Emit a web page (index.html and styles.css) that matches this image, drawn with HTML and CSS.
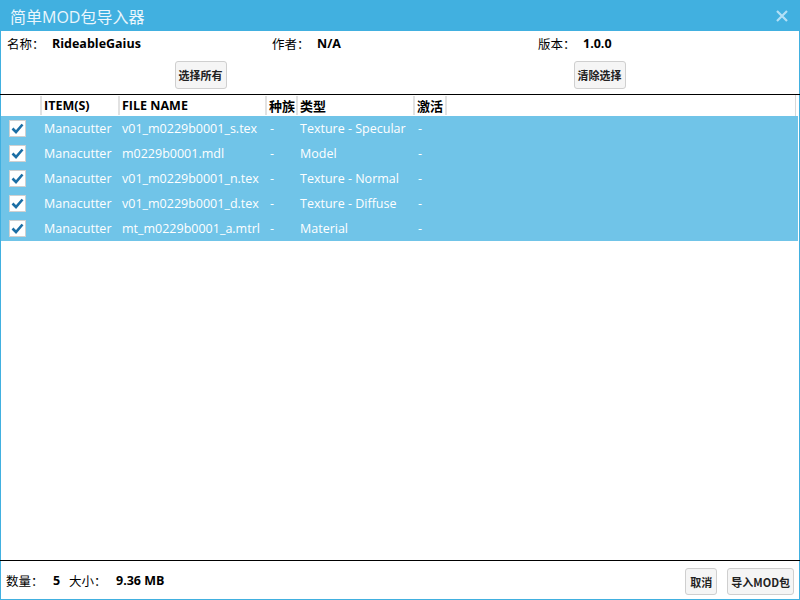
FILE: index.html
```html
<!DOCTYPE html>
<html lang="zh">
<head>
<meta charset="utf-8">
<link rel="stylesheet" href="styles.css">
</head>
<body>
<div class="window">
  <div class="titlebar">
    <span class="title">简单MOD包导入器</span>
    <svg class="close" width="12" height="12" viewBox="0 0 12 12"><path d="M1 1L11 11M11 1L1 11" stroke="#b3e0f6" stroke-width="2.2"/></svg>
  </div>
  <div class="info">
    <div class="field"><span class="label">名称：</span><span class="value">RideableGaius</span></div>
    <div class="field"><span class="label">作者：</span><span class="value">N/A</span></div>
    <div class="field"><span class="label">版本：</span><span class="value">1.0.0</span></div>
  </div>
  <div class="actions">
    <div class="cell"><button class="btn">选择所有</button></div>
    <div class="cell"><button class="btn">清除选择</button></div>
  </div>
  <div class="list">
    <div class="row head">
      <div class="c c0"></div>
      <div class="c c1">ITEM(S)</div>
      <div class="c c2">FILE NAME</div>
      <div class="c c3">种族</div>
      <div class="c c4">类型</div>
      <div class="c c5">激活</div>
      <div class="c c6"></div>
    </div>
    <div class="row sel">
      <div class="c c0"><span class="chk"><svg width="13" height="11" viewBox="0 0 13 11"><path d="M1.5 5.5L5 9L11.5 1.5" fill="none" stroke="#1b6ea5" stroke-width="2.6"/></svg></span></div>
      <div class="c c1">Manacutter</div>
      <div class="c c2">v01_m0229b0001_s.tex</div>
      <div class="c c3">-</div>
      <div class="c c4">Texture - Specular</div>
      <div class="c c5">-</div>
      <div class="c c6"></div>
    </div>
    <div class="row sel">
      <div class="c c0"><span class="chk"><svg width="13" height="11" viewBox="0 0 13 11"><path d="M1.5 5.5L5 9L11.5 1.5" fill="none" stroke="#1b6ea5" stroke-width="2.6"/></svg></span></div>
      <div class="c c1">Manacutter</div>
      <div class="c c2">m0229b0001.mdl</div>
      <div class="c c3">-</div>
      <div class="c c4">Model</div>
      <div class="c c5">-</div>
      <div class="c c6"></div>
    </div>
    <div class="row sel">
      <div class="c c0"><span class="chk"><svg width="13" height="11" viewBox="0 0 13 11"><path d="M1.5 5.5L5 9L11.5 1.5" fill="none" stroke="#1b6ea5" stroke-width="2.6"/></svg></span></div>
      <div class="c c1">Manacutter</div>
      <div class="c c2">v01_m0229b0001_n.tex</div>
      <div class="c c3">-</div>
      <div class="c c4">Texture - Normal</div>
      <div class="c c5">-</div>
      <div class="c c6"></div>
    </div>
    <div class="row sel">
      <div class="c c0"><span class="chk"><svg width="13" height="11" viewBox="0 0 13 11"><path d="M1.5 5.5L5 9L11.5 1.5" fill="none" stroke="#1b6ea5" stroke-width="2.6"/></svg></span></div>
      <div class="c c1">Manacutter</div>
      <div class="c c2">v01_m0229b0001_d.tex</div>
      <div class="c c3">-</div>
      <div class="c c4">Texture - Diffuse</div>
      <div class="c c5">-</div>
      <div class="c c6"></div>
    </div>
    <div class="row sel">
      <div class="c c0"><span class="chk"><svg width="13" height="11" viewBox="0 0 13 11"><path d="M1.5 5.5L5 9L11.5 1.5" fill="none" stroke="#1b6ea5" stroke-width="2.6"/></svg></span></div>
      <div class="c c1">Manacutter</div>
      <div class="c c2">mt_m0229b0001_a.mtrl</div>
      <div class="c c3">-</div>
      <div class="c c4">Material</div>
      <div class="c c5">-</div>
      <div class="c c6"></div>
    </div>
  </div>
  <div class="footer">
    <div class="stats">
      <span class="label">数量：</span><span class="value count">5</span>
      <span class="label">大小：</span><span class="value">9.36 MB</span>
    </div>
    <div class="buttons">
      <button class="btn small">取消</button>
      <button class="btn">导入MOD包</button>
    </div>
  </div>
</div>
</body>
</html>
```

FILE: styles.css
```css
* { box-sizing: border-box; }
html, body { margin: 0; padding: 0; }
body {
  width: 800px;
  height: 600px;
  overflow: hidden;
  font-family: "Open Sans", "Noto Sans CJK SC", sans-serif;
  color: #000;
  background: #fff;
}
.window {
  width: 800px;
  height: 600px;
  border: 1px solid #41b0e0;
  border-top: none;
  display: flex;
  flex-direction: column;
}
.titlebar {
  height: 31px;
  margin: 0 -1px;
  background: #41b0e0;
  display: flex;
  align-items: center;
  justify-content: space-between;
  padding: 0 12px 0 10px;
}
.title {
  color: #eaf6fc;
  font-size: 16px;
  font-family: "Open Sans", "Noto Sans CJK SC", sans-serif;
}
.close { display: block; }
.info {
  display: grid;
  grid-template-columns: 265px 266px 1fr;
  padding: 4px 0 0 6px;
  height: 26px;
  font-size: 12.5px;
  line-height: 18px;
}
.field { display: flex; }
.label { width: 45px; font-family: "Noto Sans CJK SC", sans-serif; }
.value { font-weight: bold; }
.actions {
  display: grid;
  grid-template-columns: 1fr 1fr;
  height: 37px;
  padding-top: 4px;
}
.cell { display: flex; justify-content: center; align-items: flex-start; }
.btn {
  height: 28px;
  padding: 0 3px;
  border: 1px solid #cfcfcf;
  border-radius: 3px;
  background: #f5f5f5;
  font-family: "Noto Sans CJK SC", sans-serif;
  font-size: 11px;
  font-weight: bold;
  color: #222;
}
.list {
  flex: 1;
  border-top: 1px solid #000;
  border-bottom: 1px solid #000;
  margin: 0 -1px;
  padding: 0 1px;
}
.row {
  display: grid;
  grid-template-columns: 39px 78px 147px 31px 117px 32px 1fr;
  height: 25px;
  align-items: center;
  font-size: 12.5px;
}
.row.head {
  height: 21px;
  font-weight: bold;
  font-size: 12.5px;
  margin-right: 3px;
  border-right: 1px solid #d8d8d8;
}
.head .c { height: 19px; line-height: 19px; border-left: 2px solid #e2e2e2; padding-left: 2px; }
.head .c0 { border-left: none; }
.head .c3, .head .c4, .head .c5 { font-family: "Noto Sans CJK SC", sans-serif; font-size: 13px; }
.row.sel {
  background: #70c4e8;
  color: #fff;
  margin-right: 1px;
}
.sel .c { padding-left: 4px; white-space: nowrap; }
.sel .c3, .sel .c5 { padding-left: 5px; }
.sel .c0 { padding-left: 8px; display: flex; align-items: center; }
.chk {
  width: 17px;
  height: 17px;
  background: #fff;
  border: 1px solid #d0d0d0;
  display: flex;
  align-items: center;
  justify-content: center;
}
.chk svg { display: block; }
.footer {
  height: 38px;
  display: flex;
  align-items: center;
  justify-content: space-between;
  padding: 0 5px 0 5px;
}
.stats { font-size: 12.5px; display: flex; align-items: center; }
.stats .label { width: 47px; }
.stats .count { width: 16px; }
.stats .label + .value + .label { width: 47px; }
.buttons { display: flex; gap: 10px; padding-top: 3px; }
.footer .btn { height: 27px; }
.btn.small { padding: 0 4px; }
```
